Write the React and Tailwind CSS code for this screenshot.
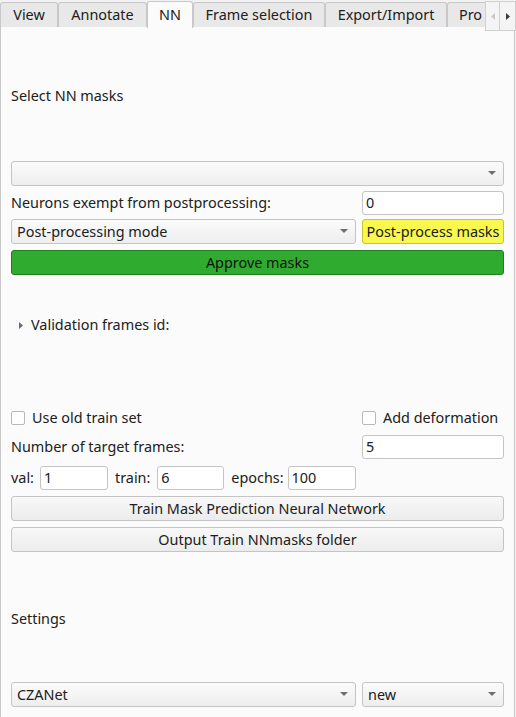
import React from "react";

const font = { fontFamily: "'Noto Sans', 'Open Sans', sans-serif" };

function Arrow() {
  return (
    <svg width="8" height="5" viewBox="0 0 8 5" className="shrink-0">
      <path d="M0 0 L8 0 L4 4 Z" fill="#6e6e6e" />
    </svg>
  );
}

function Combo({ text, className }) {
  return (
    <div
      className={
        "flex items-center justify-between h-[25px] rounded-[3px] border border-[#c4c4c4] bg-gradient-to-b from-[#fbfbfb] to-[#eeeeee] pl-[5px] pr-[7px] " +
        (className || "")
      }
    >
      <span>{text}</span>
      <Arrow />
    </div>
  );
}

function Input({ value, className }) {
  return (
    <div
      className={
        "flex items-center h-[24px] rounded-[3px] border border-[#c4c4c4] bg-white pl-[3px] shrink-0 " +
        (className || "")
      }
    >
      {value}
    </div>
  );
}

function Button({ text, className }) {
  return (
    <div
      className={
        "flex items-center justify-center h-[25px] rounded-[3px] border whitespace-nowrap " +
        (className || "")
      }
    >
      {text}
    </div>
  );
}

function Check({ label }) {
  return (
    <div className="flex items-center gap-[7px]">
      <div className="w-[14px] h-[14px] rounded-[2px] border border-[#b8b8b8] bg-white" />
      <span>{label}</span>
    </div>
  );
}

function Tab({ text, w, active }) {
  if (active) {
    return (
      <div
        className="flex items-center justify-center h-[27px] bg-[#fbfbfb] border-l border-r border-t border-[#c8c8c8] rounded-t-[3px] relative z-10 -mb-px shrink-0"
        style={{ width: w }}
      >
        {text}
      </div>
    );
  }
  return (
    <div
      className="flex items-center justify-center h-[25px] mt-[1px] bg-[#e8e8e8] border-l border-r border-t border-[#c8c8c8] rounded-t-[3px] shrink-0 overflow-hidden whitespace-nowrap"
      style={{ width: w }}
    >
      {text}
    </div>
  );
}

export default function App() {
  return (
    <div
      className="w-[516px] h-[717px] bg-[#f2f2f2] text-[14.4px] leading-[18px] text-[#202020] overflow-hidden flex flex-col"
      style={font}
    >
      <div className="flex items-end h-[27px] shrink-0 relative">
        <Tab text="View" w={58} />
        <Tab text="Annotate" w={89} />
        <Tab text="NN" w={46} active />
        <Tab text="Frame selection" w={132} />
        <Tab text="Export/Import" w={122} />
        <div className="flex items-center h-[25px] mt-[1px] bg-[#e8e8e8] border-l border-t border-[#c8c8c8] rounded-tl-[3px] w-[38px] overflow-hidden pl-[11px] whitespace-nowrap shrink-0">
          Pro
        </div>
        <div className="absolute right-0 top-[1px] flex h-[30px]">
          <div className="w-[15px] h-[30px] bg-[#f4f4f4] border border-[#d0d0d0] flex items-center justify-center">
            <svg width="4" height="7" viewBox="0 0 4 7"><path d="M4 0 L4 7 L0 3.5 Z" fill="#c8c8c8" /></svg>
          </div>
          <div className="w-[16px] h-[30px] bg-[#f4f4f4] border border-[#d0d0d0] border-l-0 flex items-center justify-center">
            <svg width="4" height="7" viewBox="0 0 4 7"><path d="M0 0 L0 7 L4 3.5 Z" fill="#3a3a3a" /></svg>
          </div>
        </div>
      </div>
      <div className="flex-1 bg-[#fbfbfb] border-l border-r border-[#c8c8c8] w-[515px] flex flex-col pl-[10px] pr-[10px]">
        <div className="h-[18px] mt-[60px] flex items-center">Select NN masks</div>
        <Combo text="" className="mt-[56px]" />
        <div className="flex items-center justify-between mt-[6px] h-[22px]">
          <span>Neurons exempt from postprocessing:</span>
          <Input value="0" className="w-[142px] h-[22px]" />
        </div>
        <div className="flex gap-[6px] mt-[5px]">
          <Combo text="Post-processing mode" className="flex-1" />
          <Button
            text="Post-process masks"
            className="w-[142px] bg-[#f8f84e] border-[#c9c62a]"
          />
        </div>
        <Button
          text="Approve masks"
          className="mt-[6px] bg-[#2fab2f] border-[#1f7f1f] text-[#111]"
        />
        <div className="flex items-center h-[18px] mt-[41px] pl-[8px] gap-[8px]">
          <svg width="4" height="7" viewBox="0 0 4 7"><path d="M0 0 L0 7 L4 3.5 Z" fill="#6a6a6a" /></svg>
          <span>Validation frames id:</span>
        </div>
        <div className="flex items-center justify-between h-[18px] mt-[75px]">
          <Check label="Use old train set" />
          <div className="w-[142px]">
            <Check label="Add deformation" />
          </div>
        </div>
        <div className="flex items-center justify-between mt-[8px]">
          <span>Number of target frames:</span>
          <Input value="5" className="w-[142px]" />
        </div>
        <div className="flex items-center mt-[7px]">
          <span>val:</span>
          <Input value="1" className="w-[68px] ml-[6px]" />
          <span className="ml-[7px]">train:</span>
          <Input value="6" className="w-[67px] ml-[7px]" />
          <span className="ml-[7px]">epochs:</span>
          <Input value="100" className="w-[68px] ml-[4px]" />
        </div>
        <Button
          text="Train Mask Prediction Neural Network"
          className="mt-[6px] bg-gradient-to-b from-[#f8f8f8] to-[#ececec] border-[#c4c4c4]"
        />
        <Button
          text="Output Train NNmasks folder"
          className="mt-[6px] bg-gradient-to-b from-[#f8f8f8] to-[#ececec] border-[#c4c4c4]"
        />
        <div className="h-[18px] mt-[58px] flex items-center">Settings</div>
        <div className="flex gap-[6px] mt-[54px]">
          <Combo text="CZANet" className="flex-1" />
          <Combo text="new" className="w-[142px]" />
        </div>
      </div>
    </div>
  );
}
